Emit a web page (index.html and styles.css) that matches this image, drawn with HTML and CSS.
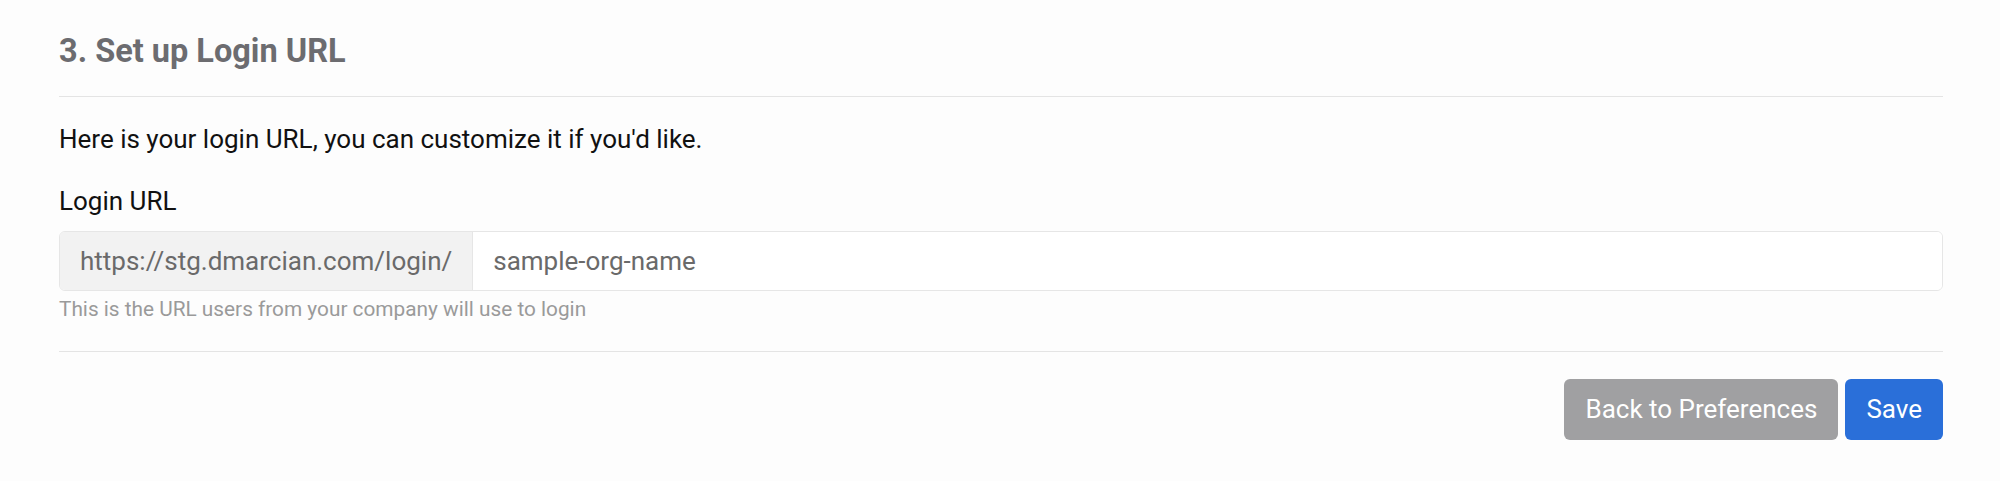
FILE: index.html
```html
<!DOCTYPE html>
<html lang="en">
<head>
    <meta charset="UTF-8" />
    <meta name="viewport" content="width=device-width, initial-scale=1.0" />
    <title>Set up Login URL</title>
    <link rel="stylesheet" href="styles.css">
</head>

<body>
    <div class="section">
        <!-- Step header -->
        <h2 class="section-title">3. Set up Login URL</h2>
        <hr class="divider" />

        <p class="intro">Here is your login URL, you can customize it if you'd like.</p>

        <!-- Login URL field -->
        <label for="orgSlug" class="field-label">Login URL</label>
        <div class="input-group">
            <span class="input-addon">https://stg.dmarcian.com/login/</span>
            <input type="text" id="orgSlug" name="orgSlug" value="sample-org-name" />
        </div>
        <small class="help-text">This is the URL users from your company will use to login</small>

        <hr class="divider divider-bottom" />

        <!-- Actions -->
        <div class="actions">
            <button class="btn btn-gray">Back to Preferences</button>
            <button class="btn btn-blue">Save</button>
        </div>
    </div>
</body>
</html>
```

FILE: styles.css
```css
/* Basic reset and background */
body {
    font-family: Roboto, "Liberation Sans", sans-serif;
    margin: 0;
    padding: 32px 0 0;
    background: #fdfdfd;
    color: #111;
}

/* Main section */
.section {
    margin: 0 57px 0 59px;
}

/* Step title */
.section-title {
    margin: 0;
    font-size: 32.5px;
    line-height: 38.4px;
    font-weight: 700;
    color: #6c6c70;
}

/* Divider lines */
.divider {
    border: none;
    border-top: 1px solid #e4e4e4;
    margin: 26px 0 23px;
}

.divider-bottom {
    margin: 26px 0 27px;
}

/* Intro text */
.intro {
    margin: 0 0 23px;
    font-size: 26px;
    line-height: 38.4px;
}

/* Field label */
.field-label {
    display: block;
    font-size: 26px;
    line-height: 38.4px;
    margin-bottom: 11px;
}

/* Input group: prefix + text field */
.input-group {
    display: flex;
    height: 60px;
    box-sizing: border-box;
    border: 1px solid #e6e6e6;
    border-radius: 6px;
    overflow: hidden;
    background: #fff;
}

.input-addon {
    display: flex;
    align-items: center;
    padding: 0 20px;
    background: #f2f2f2;
    border-right: 1px solid #e6e6e6;
    color: #6a6a6a;
    font-size: 26px;
}

.input-group input[type="text"] {
    flex: 1;
    border: none;
    outline: none;
    padding: 0 20px;
    font-family: inherit;
    font-size: 26px;
    color: #6a6a6a;
    background: #fff;
}

/* Help text under the field */
.help-text {
    display: block;
    margin-top: 3px;
    font-size: 20.8px;
    line-height: 30.7px;
    color: #9a9a9a;
}

/* Buttons */
.actions {
    display: flex;
    justify-content: flex-end;
    gap: 7px;
}

.btn {
    height: 61px;
    padding: 0 21px;
    border: none;
    border-radius: 6px;
    font-family: inherit;
    font-size: 26px;
    color: #fff;
    cursor: pointer;
}

.btn-gray {
    background: #a0a0a2;
}

.btn-blue {
    background: #2a6fd9;
}
```
